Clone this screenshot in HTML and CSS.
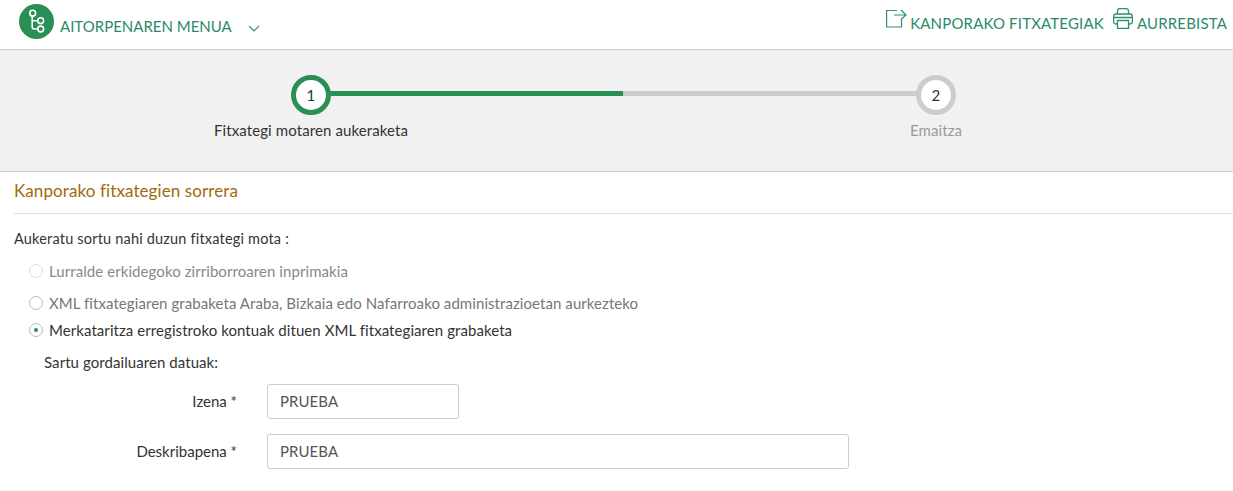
FILE: index.html
```html
<!DOCTYPE html>
<html lang="eu">
<head>
<meta charset="utf-8">
<title>Kanporako fitxategien sorrera</title>
<link rel="stylesheet" href="styles.css">
</head>
<body>
<header class="topbar">
  <div class="menu">
    <span class="logo">
      <svg width="35" height="35" viewBox="0 0 35 35" fill="none" stroke="#fff" stroke-width="1.6">
        <circle cx="13.7" cy="9.2" r="2.9"/>
        <circle cx="21.7" cy="16.7" r="2.9"/>
        <circle cx="21.7" cy="25" r="2.9"/>
        <path d="M13.2 12.100V23q0 2 2 2h3.500M13.200 16.700h5.500"/>
      </svg>
    </span>
    <span class="menu-label">AITORPENAREN MENUA</span>
    <svg class="chevron" width="12" height="7" viewBox="0 0 12 7" fill="none" stroke="#2f8f6a" stroke-width="1.1"><path d="M1 1l5 5 5-5"/></svg>
  </div>
  <nav class="actions">
    <a class="action">
      <svg class="icon-export" width="21" height="19" viewBox="0 0 21 19" fill="none" stroke="#2f9070" stroke-width="1.200"><path d="M11 1.500H.6V18H15.500V10.500M8 6H20M15 1l5 5-5 4.500"/></svg>
      <span>KANPORAKO FITXATEGIAK</span>
    </a>
    <a class="action">
      <svg class="icon-print" width="20" height="21" viewBox="0 0 20 21" fill="none" stroke="#2f9070" stroke-width="1.300"><path d="M4.500 6V3q0-2.400 2.400-2.400h6.200q2.400 0 2.400 2.400v3M4.500 16H3q-2.400 0-2.400-2.400V8.400Q.6 6 3 6h14q2.400 0 2.400 2.400v5.200q0 2.400-2.400 2.400h-1.500M4.500 12.500h11v8h-11zM.8 9.500h18.400"/></svg>
      <span>AURREBISTA</span>
    </a>
  </nav>
</header>

<section class="stepper">
  <div class="step step-active">
    <span class="bullet">1</span>
    <span class="step-label">Fitxategi motaren aukeraketa</span>
  </div>
  <div class="step step-pending">
    <span class="bullet">2</span>
    <span class="step-label">Emaitza</span>
  </div>
</section>

<main class="content">
  <h1 class="title">Kanporako fitxategien sorrera</h1>
  <p class="prompt">Aukeratu sortu nahi duzun fitxategi mota :</p>
  <div class="options">
    <label class="option option-first option-disabled"><span class="radio"></span>Lurralde erkidegoko zirriborroaren inprimakia</label>
    <label class="option option-muted"><span class="radio"></span>XML fitxategiaren grabaketa Araba, Bizkaia edo Nafarroako administrazioetan aurkezteko</label>
    <label class="option"><span class="radio radio-on"></span>Merkataritza erregistroko kontuak dituen XML fitxategiaren grabaketa</label>
  </div>
  <p class="subhead">Sartu gordailuaren datuak:</p>
  <div class="form">
    <label class="field-label">Izena *</label>
    <div class="field field-short">PRUEBA</div>
    <label class="field-label">Deskribapena *</label>
    <div class="field field-long">PRUEBA</div>
  </div>
</main>
</body>
</html>
```

FILE: styles.css
```css
* { box-sizing: border-box; }
html, body { margin: 0; padding: 0; }
body {
  height: 491px;
  overflow: hidden;
  background: #fff;
  color: #333;
  font-family: Lato, "Liberation Sans", sans-serif;
  font-size: 15px;
  line-height: 20px;
  letter-spacing: 0.07px;
}
.topbar {
  height: 50px;
  display: flex;
  justify-content: space-between;
  border-bottom: 1px solid #ccc;
  padding: 0 6px 0 19px;
}
.menu { display: flex; align-items: flex-start; padding-top: 4px; }
.logo {
  width: 35px;
  height: 35px;
  border-radius: 50%;
  background: #2a8f55;
  display: block;
  overflow: hidden;
}
.logo svg { display: block; }
.menu-label { color: #2a8a68; margin: 12px 0 0 6px; letter-spacing: 0; }
.chevron { margin: 21px 0 0 16px; }
.actions { display: flex; gap: 9px; padding-top: 8px; letter-spacing: 0.17px; }
.action { display: flex; color: #2a8a68; align-items: flex-start; }
.icon-export { margin: 1px 3px 0 0; }
.icon-print { margin-right: 4px; }
.action span { margin-top: 5px; }
.stepper {
  height: 122px;
  background: #f1f1f1;
  border-bottom: 1px solid #ccc;
  display: grid;
  grid-template-columns: 623px 626px;
  overflow: hidden;
}
.step {
  position: relative;
  display: flex;
  flex-direction: column;
  align-items: center;
  padding-top: 25px;
}
.step-active { margin-left: -1px; }
.step::before {
  content: "";
  position: absolute;
  top: 41px;
  height: 5px;
}
.step-active::before { left: 50%; right: 0; background: #2a8f55; }
.step-pending::before { left: 0; right: 50%; background: #ccc; }
.bullet {
  position: relative;
  width: 40px;
  height: 40px;
  border-radius: 50%;
  background: #fff;
  border: 5px solid #2a8f55;
  display: flex;
  align-items: center;
  justify-content: center;
  color: #333;
}
.step-pending .bullet { border-color: #ccc; }
.step-label { margin-top: 5px; letter-spacing: 0.1px; }
.step-pending .step-label { color: #999; }
.content { padding-left: 14px; }
.title {
  margin: 0;
  height: 42px;
  padding-top: 9px;
  border-bottom: 1px solid #ddd;
  font-size: 17px;
  font-weight: 400;
  letter-spacing: 0.1px;
  color: #a06a0c;
}
.prompt { margin: 15px 0 0; font-size: 14.5px; letter-spacing: 0.19px; }
.options { padding-left: 15px; }
.option { display: flex; align-items: center; height: 20px; margin-top: 7px; }
.option-first { margin-top: 12px; }
.option-muted { margin-top: 12px; color: #777; }
.option-disabled { color: #888; }
.radio {
  width: 14px;
  height: 14px;
  border: 1px solid #bbb;
  border-radius: 50%;
  background: #fff;
  margin-right: 6px;
  display: flex;
  align-items: center;
  justify-content: center;
}
.option-disabled .radio { border-color: #ddd; }
.radio-on::after {
  content: "";
  width: 4px;
  height: 4px;
  border-radius: 50%;
  background: #2a8f55;
}
.subhead { margin: 12px 0 0 30px; }
.form {
  display: grid;
  grid-template-columns: 223px max-content;
  column-gap: 30px;
  row-gap: 15px;
  margin-top: 12px;
  align-items: center;
}
.field-label { text-align: right; padding-bottom: 2px; letter-spacing: 0; }
.field {
  height: 35px;
  border: 1px solid #ccc;
  border-radius: 3px;
  padding: 0 12px 2px;
  display: flex;
  align-items: center;
  color: #555;
}
.field-short { width: 192px; }
.field-long { width: 582px; }
```
